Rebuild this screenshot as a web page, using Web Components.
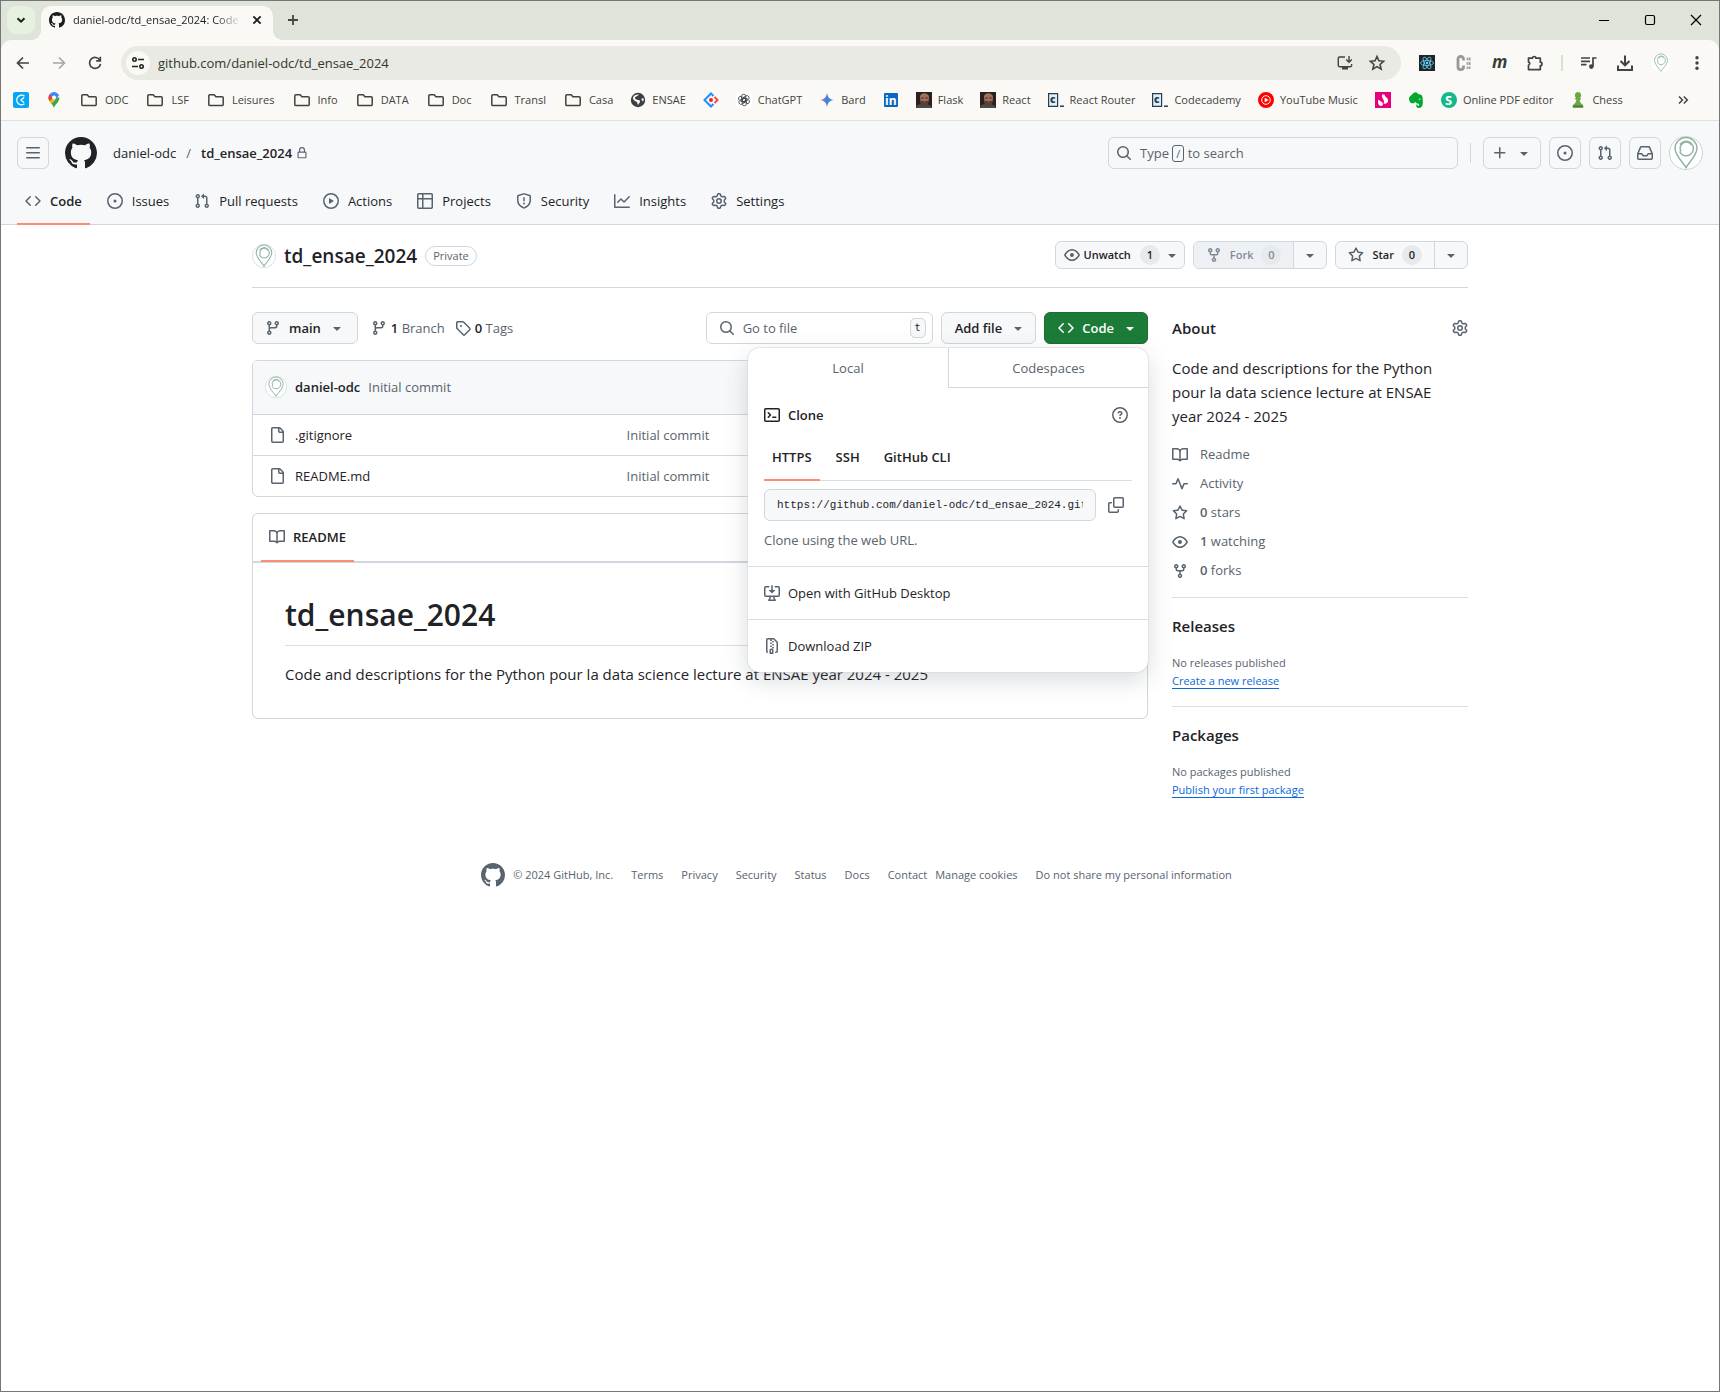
<!DOCTYPE html>
<html lang="en">
<head>
<meta charset="utf-8">
<title>daniel-odc/td_ensae_2024: Code</title>
<style>
html,body{margin:0}
body{font-family:"Open Sans","Noto Sans",sans-serif;font-size:13px;line-height:20px;color:#1f2328;background:#fff;
--line:#d0d7de;--line-soft:#d8dee4;--muted:#59636e;--canvas:#f6f8fa;--accent:#fd8c73;--chrome:#fbf9f5;--strip:#dee4d9}
</style>
</head>
<body>
<browser-window>
  <tab-strip slot="tabs"></tab-strip>
  <address-bar slot="toolbar"></address-bar>
  <bookmarks-bar slot="bookmarks"></bookmarks-bar>
  <site-header></site-header>
  <repo-page>
    <repo-title slot="title" name="td_ensae_2024"></repo-title>
    <branch-bar></branch-bar>
    <file-list></file-list>
    <readme-box></readme-box>
    <about-panel slot="side"></about-panel>
  </repo-page>
  <site-footer></site-footer>
</browser-window>
<script>
const OCT={
mark:'M8 0c4.42 0 8 3.58 8 8a8.013 8.013 0 0 1-5.45 7.59c-.4.08-.55-.17-.55-.38 0-.27.01-1.13.01-2.2 0-.75-.25-1.23-.54-1.48 1.78-.2 3.65-.88 3.65-3.95 0-.88-.31-1.59-.82-2.15.08-.2.36-1.02-.08-2.12 0 0-.67-.22-2.2.82-.64-.18-1.32-.27-2-.27-.68 0-1.36.09-2 .27-1.53-1.03-2.2-.82-2.2-.82-.44 1.1-.16 1.92-.08 2.12-.51.56-.82 1.28-.82 2.15 0 3.06 1.86 3.75 3.64 3.95-.23.2-.44.55-.51 1.07-.46.21-1.61.55-2.33-.66-.15-.24-.6-.83-1.23-.82-.67.01-.27.38.01.53.34.19.73.9.82 1.13.16.45.68 1.31 2.69.94 0 .67.01 1.3.01 1.49 0 .21-.15.45-.55.38A7.995 7.995 0 0 1 0 8c0-4.42 3.58-8 8-8Z',
code:'m11.28 3.22 4.25 4.25a.75.75 0 0 1 0 1.06l-4.25 4.25a.749.749 0 0 1-1.275-.326.749.749 0 0 1 .215-.734L13.94 8l-3.72-3.72a.749.749 0 0 1 .326-1.275.749.749 0 0 1 .734.215Zm-6.56 0a.751.751 0 0 1 1.042.018.751.751 0 0 1 .018 1.042L2.06 8l3.72 3.72a.749.749 0 0 1-.326 1.275.749.749 0 0 1-.734-.215L.47 8.53a.75.75 0 0 1 0-1.06Z',
issue:'M8 9.5a1.5 1.5 0 1 0 0-3 1.5 1.5 0 0 0 0 3ZM8 0a8 8 0 1 1 0 16A8 8 0 0 1 8 0ZM1.5 8a6.5 6.5 0 1 0 13 0 6.5 6.5 0 0 0-13 0Z',
pr:'M1.5 3.25a2.25 2.25 0 1 1 3 2.122v5.256a2.251 2.251 0 1 1-1.5 0V5.372A2.25 2.25 0 0 1 1.5 3.25Zm5.677-.177L9.573.677A.25.25 0 0 1 10 .854V2.5h1A2.5 2.5 0 0 1 13.5 5v5.628a2.251 2.251 0 1 1-1.5 0V5a1 1 0 0 0-1-1h-1v1.646a.25.25 0 0 1-.427.177L7.177 3.427a.25.25 0 0 1 0-.354ZM3.75 2.5a.75.75 0 1 0 0 1.5.75.75 0 0 0 0-1.5Zm0 9.5a.75.75 0 1 0 0 1.5.75.75 0 0 0 0-1.5Zm8.25.75a.75.75 0 1 0 1.5 0 .75.75 0 0 0-1.5 0Z',
play:'M8 0a8 8 0 1 1 0 16A8 8 0 0 1 8 0ZM1.5 8a6.5 6.5 0 1 0 13 0 6.5 6.5 0 0 0-13 0Zm4.879-2.773 4.264 2.559a.25.25 0 0 1 0 .428l-4.264 2.559A.25.25 0 0 1 6 10.559V5.442a.25.25 0 0 1 .379-.215Z',
table:'M0 1.75C0 .784.784 0 1.75 0h12.5C15.216 0 16 .784 16 1.75v12.5A1.75 1.75 0 0 1 14.25 16H1.75A1.75 1.75 0 0 1 0 14.25ZM6.5 6.5v8h7.75a.25.25 0 0 0 .25-.25V6.5Zm8-1.5V1.75a.25.25 0 0 0-.25-.25H6.5V5Zm-13 1.5v7.75c0 .138.112.25.25.25H5v-8ZM5 5V1.5H1.75a.25.25 0 0 0-.25.25V5Z',
shield:'M7.467.133a1.748 1.748 0 0 1 1.066 0l5.25 1.68A1.75 1.75 0 0 1 15 3.48V7c0 1.566-.32 3.182-1.303 4.682-.983 1.498-2.585 2.813-5.032 3.855a1.697 1.697 0 0 1-1.33 0c-2.447-1.042-4.049-2.357-5.032-3.855C1.32 10.182 1 8.566 1 7V3.48a1.75 1.75 0 0 1 1.217-1.667Zm.61 1.429a.25.25 0 0 0-.153 0l-5.25 1.68a.25.25 0 0 0-.174.238V7c0 1.358.275 2.666 1.057 3.86.784 1.194 2.121 2.34 4.366 3.297a.196.196 0 0 0 .154 0c2.245-.956 3.582-2.104 4.366-3.298C13.225 9.666 13.5 8.36 13.5 7V3.48a.251.251 0 0 0-.174-.237l-5.25-1.68ZM8.75 4.75v3a.75.75 0 0 1-1.5 0v-3a.75.75 0 0 1 1.5 0ZM9 10.5a1 1 0 1 1-2 0 1 1 0 0 1 2 0Z',
graph:'M1.5 1.75V13.5h13.75a.75.75 0 0 1 0 1.5H.75a.75.75 0 0 1-.75-.75V1.75a.75.75 0 0 1 1.5 0Zm14.28 2.53-5.25 5.25a.75.75 0 0 1-1.06 0L7 7.06 4.28 9.78a.751.751 0 0 1-1.042-.018.751.751 0 0 1-.018-1.042l3.25-3.25a.75.75 0 0 1 1.06 0L10 7.94l4.72-4.72a.751.751 0 0 1 1.042.018.751.751 0 0 1 .018 1.042Z',
gear:'M8 0a8.2 8.2 0 0 1 .701.031C9.444.095 9.99.645 10.16 1.29l.288 1.107c.018.066.079.158.212.224.231.114.454.243.668.386.123.082.233.09.299.071l1.103-.303c.644-.176 1.392.021 1.82.63.27.385.506.792.704 1.218.315.675.111 1.422-.364 1.891l-.814.806c-.049.048-.098.147-.088.294.016.257.016.515 0 .772-.01.147.038.246.088.294l.814.806c.475.469.679 1.216.364 1.891a7.977 7.977 0 0 1-.704 1.217c-.428.61-1.176.807-1.82.63l-1.102-.302c-.067-.019-.177-.011-.3.071a5.909 5.909 0 0 1-.668.386c-.133.066-.194.158-.211.224l-.29 1.106c-.168.646-.715 1.196-1.458 1.26a8.006 8.006 0 0 1-1.402 0c-.743-.064-1.289-.614-1.458-1.26l-.289-1.106c-.018-.066-.079-.158-.212-.224a5.738 5.738 0 0 1-.668-.386c-.123-.082-.233-.09-.299-.071l-1.103.303c-.644.176-1.392-.021-1.82-.63a8.12 8.12 0 0 1-.704-1.218c-.315-.675-.111-1.422.363-1.891l.815-.806c.05-.048.098-.147.088-.294a6.214 6.214 0 0 1 0-.772c.01-.147-.038-.246-.088-.294l-.815-.806C.635 6.045.431 5.298.746 4.623a7.92 7.92 0 0 1 .704-1.217c.428-.61 1.176-.807 1.82-.63l1.102.302c.067.019.177.011.3-.071.214-.143.437-.272.668-.386.133-.066.194-.158.211-.224l.29-1.106C6.009.645 6.556.095 7.299.03 7.53.01 7.764 0 8 0Zm-.571 1.525c-.036.003-.108.036-.137.146l-.289 1.105c-.147.561-.549.967-.998 1.189-.173.086-.34.183-.5.29-.417.278-.97.423-1.529.27l-1.103-.303c-.109-.03-.175.016-.195.045-.22.312-.412.644-.573.99-.014.031-.021.11.059.19l.815.806c.411.406.562.957.53 1.456a4.709 4.709 0 0 0 0 .582c.032.499-.119 1.05-.53 1.456l-.815.806c-.081.08-.073.159-.059.19.162.346.353.677.573.989.02.03.085.076.195.046l1.102-.303c.56-.153 1.113-.008 1.53.27.161.107.328.204.501.29.447.222.85.629.997 1.189l.289 1.105c.029.109.101.143.137.146a6.6 6.6 0 0 0 1.142 0c.036-.003.108-.036.137-.146l.289-1.105c.147-.561.549-.967.998-1.189.173-.086.34-.183.5-.29.417-.278.97-.423 1.529-.27l1.103.303c.109.029.175-.016.195-.045.22-.313.411-.644.573-.99.014-.031.021-.11-.059-.19l-.815-.806c-.411-.406-.562-.957-.53-1.456a4.709 4.709 0 0 0 0-.582c-.032-.499.119-1.05.53-1.456l.815-.806c.081-.08.073-.159.059-.19a6.464 6.464 0 0 0-.573-.989c-.02-.03-.085-.076-.195-.046l-1.102.303c-.56.153-1.113.008-1.53-.27a4.44 4.44 0 0 0-.501-.29c-.447-.222-.85-.629-.997-1.189l-.289-1.105c-.029-.11-.101-.143-.137-.146a6.6 6.6 0 0 0-1.142 0ZM11 8a3 3 0 1 1-6 0 3 3 0 0 1 6 0ZM9.5 8a1.5 1.5 0 1 0-3.001.001A1.5 1.5 0 0 0 9.5 8Z',
bars:'M1 2.75A.75.75 0 0 1 1.75 2h12.5a.75.75 0 0 1 0 1.5H1.75A.75.75 0 0 1 1 2.75Zm0 5A.75.75 0 0 1 1.75 7h12.5a.75.75 0 0 1 0 1.5H1.75A.75.75 0 0 1 1 7.75ZM1.75 12h12.5a.75.75 0 0 1 0 1.5H1.75a.75.75 0 0 1 0-1.5Z',
lock:'M4 4a4 4 0 0 1 8 0v2h.25c.966 0 1.75.784 1.75 1.75v5.5A1.75 1.75 0 0 1 12.25 15h-8.5A1.75 1.75 0 0 1 2 13.25v-5.5C2 6.784 2.784 6 3.75 6H4Zm8.25 3.5h-8.5a.25.25 0 0 0-.25.25v5.5c0 .138.112.25.25.25h8.5a.25.25 0 0 0 .25-.25v-5.5a.25.25 0 0 0-.25-.25ZM10.5 6V4a2.5 2.5 0 1 0-5 0v2Z',
search:'M10.68 11.74a6 6 0 0 1-7.922-8.982 6 6 0 0 1 8.982 7.922l3.04 3.04a.749.749 0 0 1-.326 1.275.749.749 0 0 1-.734-.215ZM11.5 7a4.499 4.499 0 1 0-8.997 0A4.499 4.499 0 0 0 11.5 7Z',
plus:'M7.75 2a.75.75 0 0 1 .75.75V7h4.25a.75.75 0 0 1 0 1.5H8.5v4.25a.75.75 0 0 1-1.5 0V8.5H2.75a.75.75 0 0 1 0-1.5H7V2.75A.75.75 0 0 1 7.75 2Z',
caret:'m4.427 7.427 3.396 3.396a.25.25 0 0 0 .354 0l3.396-3.396A.25.25 0 0 0 11.396 7H4.604a.25.25 0 0 0-.177.427Z',
inbox:'M2.8 2.06A1.75 1.75 0 0 1 4.41 1h7.18c.7 0 1.333.417 1.61 1.06l2.74 6.395c.04.093.06.194.06.295v4.5A1.75 1.75 0 0 1 14.25 15H1.75A1.75 1.75 0 0 1 0 13.25v-4.5c0-.101.02-.202.06-.295Zm1.61.44a.25.25 0 0 0-.23.152L1.887 8H4.75a.75.75 0 0 1 .6.3L6.625 10h2.75l1.275-1.7a.75.75 0 0 1 .6-.3h2.863L11.82 2.652a.25.25 0 0 0-.23-.152Zm10.09 7h-2.875l-1.275 1.7a.75.75 0 0 1-.6.3h-3.5a.75.75 0 0 1-.6-.3L4.375 9.5H1.5v3.75c0 .138.112.25.25.25h12.5a.25.25 0 0 0 .25-.25Z',
eye:'M8 2c1.981 0 3.671.992 4.933 2.078 1.27 1.091 2.187 2.345 2.637 3.023a1.62 1.62 0 0 1 0 1.798c-.45.678-1.367 1.932-2.637 3.023C11.67 13.008 9.981 14 8 14c-1.981 0-3.671-.992-4.933-2.078C1.797 10.83.88 9.576.43 8.898a1.62 1.62 0 0 1 0-1.798c.45-.677 1.367-1.931 2.637-3.022C4.33 2.992 6.019 2 8 2ZM1.679 7.932a.12.12 0 0 0 0 .136c.411.622 1.241 1.75 2.366 2.717C5.176 11.758 6.527 12.5 8 12.5c1.473 0 2.825-.742 3.955-1.715 1.124-.967 1.954-2.096 2.366-2.717a.12.12 0 0 0 0-.136c-.412-.621-1.242-1.75-2.366-2.717C10.824 4.242 9.473 3.5 8 3.5c-1.473 0-2.825.742-3.955 1.715-1.124.967-1.954 2.096-2.366 2.717ZM8 10a2 2 0 1 1-.001-3.999A2 2 0 0 1 8 10Z',
fork:'M5 5.372v.878c0 .414.336.75.75.75h4.5a.75.75 0 0 0 .75-.75v-.878a2.25 2.25 0 1 1 1.5 0v.878a2.25 2.25 0 0 1-2.25 2.25h-1.5v2.128a2.251 2.251 0 1 1-1.5 0V8.5h-1.5A2.25 2.25 0 0 1 3.5 6.25v-.878a2.25 2.25 0 1 1 1.5 0ZM5 3.25a.75.75 0 1 0-1.5 0 .75.75 0 0 0 1.5 0Zm6.75.75a.75.75 0 1 0 0-1.5.75.75 0 0 0 0 1.5Zm-3 8.75a.75.75 0 1 0-1.5 0 .75.75 0 0 0 1.5 0Z',
star:'M8 .25a.75.75 0 0 1 .673.418l1.882 3.815 4.21.612a.75.75 0 0 1 .416 1.279l-3.046 2.97.719 4.192a.751.751 0 0 1-1.088.791L8 12.347l-3.766 1.98a.75.75 0 0 1-1.088-.79l.72-4.194L.818 6.374a.75.75 0 0 1 .416-1.28l4.21-.611L7.327.668A.75.75 0 0 1 8 .25Zm0 2.445L6.615 5.5a.75.75 0 0 1-.564.41l-3.097.45 2.24 2.184a.75.75 0 0 1 .216.664l-.528 3.084 2.769-1.456a.75.75 0 0 1 .698 0l2.77 1.456-.53-3.084a.75.75 0 0 1 .216-.664l2.24-2.183-3.096-.45a.75.75 0 0 1-.564-.41L8 2.694Z',
branch:'M9.5 3.25a2.25 2.25 0 1 1 3 2.122V6A2.5 2.5 0 0 1 10 8.5H6a1 1 0 0 0-1 1v1.128a2.251 2.251 0 1 1-1.5 0V5.372a2.25 2.25 0 1 1 1.5 0v1.836A2.493 2.493 0 0 1 6 7h4a1 1 0 0 0 1-1v-.628A2.25 2.25 0 0 1 9.5 3.25Zm-6 0a.75.75 0 1 0 1.5 0 .75.75 0 0 0-1.5 0Zm8.25-.75a.75.75 0 1 0 0 1.5.75.75 0 0 0 0-1.5ZM4.25 12a.75.75 0 1 0 0 1.5.75.75 0 0 0 0-1.5Z',
tag:'M1 7.775V2.75C1 1.784 1.784 1 2.75 1h5.025c.464 0 .91.184 1.238.513l6.25 6.25a1.75 1.75 0 0 1 0 2.474l-5.026 5.026a1.75 1.75 0 0 1-2.474 0l-6.25-6.25A1.752 1.752 0 0 1 1 7.775Zm1.5 0c0 .066.026.13.073.177l6.25 6.25a.25.25 0 0 0 .354 0l5.025-5.025a.25.25 0 0 0 0-.354l-6.25-6.25a.25.25 0 0 0-.177-.073H2.75a.25.25 0 0 0-.25.25ZM6 5a1 1 0 1 1 0 2 1 1 0 0 1 0-2Z',
file:'M2 1.75C2 .784 2.784 0 3.75 0h6.586c.464 0 .909.184 1.237.513l2.914 2.914c.329.328.513.773.513 1.237v9.586A1.75 1.75 0 0 1 13.25 16h-9.5A1.75 1.75 0 0 1 2 14.25Zm1.75-.25a.25.25 0 0 0-.25.25v12.5c0 .138.112.25.25.25h9.5a.25.25 0 0 0 .25-.25V6h-2.75A1.75 1.75 0 0 1 9 4.25V1.5Zm6.75.062V4.25c0 .138.112.25.25.25h2.688l-.011-.013-2.914-2.914-.013-.011Z',
book:'M0 1.75A.75.75 0 0 1 .75 1h4.253c1.227 0 2.317.59 3 1.501A3.743 3.743 0 0 1 11.006 1h4.245a.75.75 0 0 1 .75.75v10.5a.75.75 0 0 1-.75.75h-4.507a2.25 2.25 0 0 0-1.591.659l-.622.621a.75.75 0 0 1-1.06 0l-.622-.621A2.25 2.25 0 0 0 5.258 13H.75a.75.75 0 0 1-.75-.75Zm7.251 10.324.004-5.073-.002-2.253A2.25 2.25 0 0 0 5.003 2.5H1.5v9h3.757a3.75 3.75 0 0 1 1.994.574ZM8.755 4.75l-.004 7.322a3.752 3.752 0 0 1 1.992-.572H14.5v-9h-3.495a2.25 2.25 0 0 0-2.25 2.25Z',
pulse:'M6 2c.306 0 .582.187.696.471L10 10.731l1.304-3.26A.751.751 0 0 1 12 7h3.25a.75.75 0 0 1 0 1.5h-2.742l-1.812 4.528a.751.751 0 0 1-1.392 0L6 4.77 4.696 8.03A.75.75 0 0 1 4 8.5H.75a.75.75 0 0 1 0-1.5h2.742l1.812-4.529A.751.751 0 0 1 6 2Z',
terminal:'M0 2.75C0 1.784.784 1 1.75 1h12.5c.966 0 1.75.784 1.75 1.75v10.5A1.75 1.75 0 0 1 14.25 15H1.75A1.75 1.75 0 0 1 0 13.25Zm1.75-.25a.25.25 0 0 0-.25.25v10.5c0 .138.112.25.25.25h12.5a.25.25 0 0 0 .25-.25V2.75a.25.25 0 0 0-.25-.25ZM7.25 8a.749.749 0 0 1-.22.53l-2.25 2.25a.749.749 0 0 1-1.275-.326.749.749 0 0 1 .215-.734L5.44 8 3.72 6.28a.749.749 0 0 1 .326-1.275.749.749 0 0 1 .734.215l2.25 2.25c.141.14.22.331.22.53Zm1.5 1.5h3a.75.75 0 0 1 0 1.5h-3a.75.75 0 0 1 0-1.5Z',
question:'M0 8a8 8 0 1 1 16 0A8 8 0 0 1 0 8Zm8-6.5a6.5 6.5 0 1 0 0 13 6.5 6.5 0 0 0 0-13ZM6.92 6.085h.001a.749.749 0 1 1-1.342-.67c.169-.339.436-.701.849-.977C6.845 4.16 7.369 4 8 4a2.756 2.756 0 0 1 1.637.525c.503.377.863.965.863 1.725 0 .448-.115.83-.329 1.15-.205.307-.47.513-.692.662-.109.072-.22.138-.313.195l-.006.004a6.24 6.24 0 0 0-.26.16.952.952 0 0 0-.276.245.75.75 0 0 1-1.248-.832c.184-.264.42-.489.692-.661.103-.067.207-.132.313-.195l.007-.004c.1-.061.182-.11.258-.161a.969.969 0 0 0 .277-.245C8.96 6.514 9 6.427 9 6.25a.612.612 0 0 0-.262-.525A1.27 1.27 0 0 0 8 5.5c-.369 0-.595.09-.74.187a1.01 1.01 0 0 0-.34.398ZM9 11a1 1 0 1 1-2 0 1 1 0 0 1 2 0Z',
copy:'M0 6.75C0 5.784.784 5 1.75 5h1.5a.75.75 0 0 1 0 1.5h-1.5a.25.25 0 0 0-.25.25v7.5c0 .138.112.25.25.25h7.5a.25.25 0 0 0 .25-.25v-1.5a.75.75 0 0 1 1.5 0v1.5A1.75 1.75 0 0 1 9.25 16h-7.5A1.75 1.75 0 0 1 0 14.25ZM5 1.75C5 .784 5.784 0 6.75 0h7.5C15.216 0 16 .784 16 1.75v7.5A1.75 1.75 0 0 1 14.25 11h-7.5A1.75 1.75 0 0 1 5 9.25Zm1.75-.25a.25.25 0 0 0-.25.25v7.5c0 .138.112.25.25.25h7.5a.25.25 0 0 0 .25-.25v-7.5a.25.25 0 0 0-.25-.25Z',
desktop:'m4.927 5.427 2.896 2.896a.25.25 0 0 0 .354 0l2.896-2.896A.25.25 0 0 0 10.896 5H8.75V.75a.75.75 0 1 0-1.5 0V5H5.104a.25.25 0 0 0-.177.427ZM1.573 2.573a.25.25 0 0 0-.073.177v7.5a.25.25 0 0 0 .25.25h12.5a.25.25 0 0 0 .25-.25v-7.5a.25.25 0 0 0-.25-.25h-3a.75.75 0 1 1 0-1.5h3A1.75 1.75 0 0 1 16 2.75v7.5A1.75 1.75 0 0 1 14.25 12h-3.727c.099 1.041.52 1.872 1.292 2.757A.752.752 0 0 1 11.25 16h-6.5a.75.75 0 0 1-.565-1.243c.772-.885 1.192-1.716 1.292-2.757H1.75A1.75 1.75 0 0 1 0 10.25v-7.5A1.75 1.75 0 0 1 1.75 1h3a.75.75 0 0 1 0 1.5h-3a.25.25 0 0 0-.177.073ZM6.982 12a5.72 5.72 0 0 1-.765 2.5h3.566a5.72 5.72 0 0 1-.765-2.5H6.982Z',
zip:'M3.5 1.75v11.5c0 .09.048.173.126.217a.75.75 0 0 1-.752 1.298A1.748 1.748 0 0 1 2 13.25V1.75C2 .784 2.784 0 3.75 0h5.586c.464 0 .909.185 1.237.513l2.914 2.914c.329.328.513.773.513 1.237v8.586A1.75 1.75 0 0 1 12.25 15h-.5a.75.75 0 0 1 0-1.5h.5a.25.25 0 0 0 .25-.25V4.664a.25.25 0 0 0-.073-.177L9.513 1.573a.25.25 0 0 0-.177-.073H7.25a.75.75 0 0 1 0 1.5h-.5a.75.75 0 0 1 0-1.5h-3a.25.25 0 0 0-.25.25Zm3.75 8.75h.5c.966 0 1.75.784 1.75 1.75v3a.75.75 0 0 1-.75.75h-2.5a.75.75 0 0 1-.75-.75v-3c0-.966.784-1.75 1.75-1.75ZM6 5.25a.75.75 0 0 1 .75-.75h.5a.75.75 0 0 1 0 1.5h-.5A.75.75 0 0 1 6 5.25Zm.75 2.25h.5a.75.75 0 0 1 0 1.5h-.5a.75.75 0 0 1 0-1.5ZM8 6.75A.75.75 0 0 1 8.75 6h.5a.75.75 0 0 1 0 1.5h-.5A.75.75 0 0 1 8 6.75ZM8.75 3h.5a.75.75 0 0 1 0 1.5h-.5a.75.75 0 0 1 0-1.5ZM8 9.75A.75.75 0 0 1 8.75 9h.5a.75.75 0 0 1 0 1.5h-.5A.75.75 0 0 1 8 9.75Zm-1 2.5v2.25h1v-2.25a.25.25 0 0 0-.25-.25h-.5a.25.25 0 0 0-.25.25Z'
};
const line=(d,w=1.8)=>`<g fill="none" stroke="currentColor" stroke-width="${w}">${d}</g>`;
/* Multi-part marks: [viewBox size, markup] */
const ART={
chevron:[16,line('<path d="m4.500 6.200 3.500 3.500 3.500-3.500"/>',2)],
x:[16,line('<path d="m4.400 4.400 7.200 7.200M11.600 4.400 4.400 11.600"/>',1.9)],
tabplus:[16,line('<path d="M8 3v10M3 8h10"/>',1.8)],
min:[16,line('<path d="M3 8.500h10"/>',1)],
max:[16,line('<rect x="3.500" y="3.500" width="9" height="9" rx="1.500"/>',1.2)],
close:[16,line('<path d="m3 3 10 10M13 3 3 13"/>',1.2)],
back:[16,line('<path d="M14 8H3M8 2.500 2.500 8 8 13.500"/>',1.7)],
forward:[16,line('<path d="M2 8h11M8 2.500 13.500 8 8 13.500"/>',1.7)],
reload:[16,line('<path d="M12.900 5.300A5.500 5.500 0 1 0 13.500 8.800"/><path d="M13.300 1.800v4.100H9.200"/>',1.7)],
tune:[16,line('<circle cx="4.500" cy="4.500" r="1.700"/><path d="M8 4.500h6M2 11.500h6"/><circle cx="11.500" cy="11.500" r="1.700"/>',1.6)],
install:[16,line('<path d="M8 2H2.500A1.200 1.200 0 0 0 1.300 3.200v7.300a1.200 1.200 0 0 0 1.200 1.200h10.900a1.200 1.200 0 0 0 1.200-1.200V9"/><path d="M12 1v6M9.200 4.500 12 7.200l2.800-2.700"/>',1.4)+'<path d="M5 12h6v2.500H5z"/>'],
bookmark:[16,line('<path d="m8 2.200 1.700 3.900 4.200.4-3.200 2.800 1 4.100L8 11.200l-3.700 2.200 1-4.100L2.100 6.500l4.200-.4Z"/>',1.4)],
react:[16,'<path fill="#20232a" d="M0 0h16v16H0z"/><g fill="none" stroke="#61dafb" stroke-width=".8"><ellipse cx="8" cy="8" rx="6.500" ry="2.500"/><ellipse cx="8" cy="8" rx="6.500" ry="2.500" transform="rotate(60 8 8)"/><ellipse cx="8" cy="8" rx="6.500" ry="2.500" transform="rotate(120 8 8)"/></g><circle cx="8" cy="8" r="1.300" fill="#61dafb"/>'],
ci:[16,'<path d="M8.500 5.500V4A2.500 2.500 0 0 0 6 1.500h-.500A2.500 2.500 0 0 0 3 4v8a2.500 2.500 0 0 0 2.500 2.500H6A2.500 2.500 0 0 0 8.500 12v-1.500" fill="none" stroke="#999" stroke-width="2.800"/><path d="M12.500 2.500v11.500" stroke="#aaa" stroke-width="2" stroke-dasharray="3 1.500" fill="none"/><path d="M14.700 2.500v11.500" stroke="#999" stroke-width="1.600" stroke-dasharray="3 1.500" fill="none"/>'],
m:[16,'<text x="1" y="13" font-family="Open Sans" font-size="17" font-weight="700" font-style="italic" fill="#3c3c3c">m</text>'],
puzzle:[16,line('<path d="M1.500 3.200h4a1.700 1.700 0 0 1 3.400 0h4.400v4a1.700 1.700 0 0 1 0 3.400v4H1.500v-4.300a1.800 1.800 0 0 0 0-3.400Z" stroke-linejoin="round"/>',1.7)],
queue:[16,line('<path d="M0 3h9M0 6.300h9M0 9.600h5.500M12 11.500V3h3.500"/>',1.7)+'<circle cx="10.300" cy="11.600" r="2.300"/>'],
download:[16,line('<path d="M8 .5v9.500M3.500 6 8 10.300 12.500 6M1 10.500V15h14v-4.500"/>',2)],
dots:[16,'<circle cx="8" cy="2.700" r="1.700"/><circle cx="8" cy="8" r="1.700"/><circle cx="8" cy="13.300" r="1.700"/>'],
more:[16,line('<path d="m4 4.500 3.500 3.500L4 11.500M8.800 4.500 12.300 8l-3.500 3.500"/>',1.5)],
folder:[20,line('<path d="M3.900 4.700h4.300l1.700 2h6.200a1.100 1.100 0 0 1 1.100 1.100v6.600a1.100 1.100 0 0 1-1.100 1.100H3.900a1.100 1.100 0 0 1-1.100-1.100V5.800a1.100 1.100 0 0 1 1.100-1.100Z"/>',1.5)],
clickup:[16,'<rect width="16" height="16" rx="2" fill="#05a7f5"/><g fill="none" stroke="#fff" stroke-width="1.300"><path d="M11.500 4.200A4.800 4.800 0 1 0 11.500 11.800M11 5.500 8 8l3 2.500"/></g>'],
maps:[16,'<path fill="#34a853" d="M8 16C7.300 12.500 2.500 10 2.500 5.500h11C13.500 10 8.700 12.500 8 16Z"/><path fill="#fbbc04" d="M3.500 9 9 3l1.500 4-5.300 5Z"/><path fill="#ea4335" d="M3.700 2 8 5.500 3.500 9A6 6 0 0 1 3.700 2Z"/><path fill="#4285f4" d="M3.700 2A5.500 5.500 0 0 1 13 3.500L9 8 6 6Z"/><circle cx="8" cy="5.500" r="2" fill="#fff"/>'],
globe:[16,'<circle cx="8" cy="8" r="7.200" fill="#3c4043"/><path fill="#fbf9f5" d="M9 2.500C8 4.500 5.500 4 5 5.500S7 8 8.500 8s2 1.500 1.200 2.500L8 13c-1-1.500 0-2.500-2-3.500S2.500 7 3 5.500 5.500 2 9 2.500ZM12 6l2 1-1 2.500L11.500 8Z"/>'],
diamond:[16,'<g fill="none" stroke-width="2"><path stroke="#1890ff" d="M10.500 4 8 1.500 1.500 8 8 14.500l2.500-2.500"/><path stroke="#f5484f" d="M11.500 5 14.500 8l-3 3"/></g><circle cx="8" cy="8" r="2" fill="#f5222d"/>'],
gpt:[16,'<rect width="16" height="16" rx="3" fill="#fff"/><g fill="none" stroke="#3c4043" stroke-width=".8"><rect x="5.500" y="2.200" width="4.200" height="7.500" rx="2.100"/><rect x="5.500" y="2.200" width="4.200" height="7.500" rx="2.100" transform="rotate(60 8 8)"/><rect x="5.500" y="2.200" width="4.200" height="7.500" rx="2.100" transform="rotate(120 8 8)"/><rect x="5.500" y="2.200" width="4.200" height="7.500" rx="2.100" transform="rotate(180 8 8)"/><rect x="5.500" y="2.200" width="4.200" height="7.500" rx="2.100" transform="rotate(240 8 8)"/><rect x="5.500" y="2.200" width="4.200" height="7.500" rx="2.100" transform="rotate(300 8 8)"/></g>'],
bard:[16,'<defs><linearGradient id="b"><stop offset=".1" stop-color="#b36fc4"/><stop offset=".5" stop-color="#3f7fd8"/><stop offset="1" stop-color="#35a0ea"/></linearGradient></defs><path fill="url(#b)" d="M8 1C8.800 5.500 10.500 7.200 15 8 10.500 8.800 8.800 10.500 8 15 7.200 10.500 5.500 8.800 1 8 5.500 7.200 7.200 5.500 8 1Z"/>'],
linkedin:[16,'<rect x="1" y="1" width="14" height="14" rx="1" fill="#0a66c2"/><text x="2" y="13" font-family="Open Sans" font-size="12" font-weight="700" fill="#fff">in</text>'],
face:[16,'<path fill="#2a211e" d="M0 0h16v16H0z"/><path fill="#a3705c" d="M4 5c0-5 8.500-5 9 0l-.5 5L10 14H7L4.500 10Z"/><path fill="#5b4038" d="M4.300 8.500c3 1 5 1 8 0l-.3 3-2 3H7l-2.500-3Z"/><path fill="#4a4a48" d="m0 16 1-3 5-1 2 2 3-2 4 2 1 2Z"/><path stroke="#2a1813" d="M5.500 6h2M9.500 6h2"/>'],
codecademy:[16,'<path fill="#e4ebf2" stroke="#204056" stroke-width="1.200" d="M.6 1.600h9v12.800h-9z"/><path stroke="#204056" stroke-width="1.500" d="M12 14.200h4"/><text x="2" y="11" font-family="Open Sans" font-size="10" font-weight="800" fill="#204056">c</text>'],
ytmusic:[16,'<circle cx="8" cy="8" r="8" fill="red"/><circle cx="8" cy="8" r="4.300" fill="none" stroke="#fff"/><path fill="#fff" d="m6.700 5.800 4 2.200-4 2.200Z"/>'],
pink:[16,'<path fill="#e6007e" d="M0 0h16v16H0z"/><path fill="#fff" d="M7 2.500h2.500C9.500 5 13.500 5.500 13 9c-.3 2.300-2.500 3.300-4.500 2.500 2-3.500-2.500-5-1.500-9ZM3.500 7.500C5 9.500 8.500 10 8 12.500c-.4 1.800-3 1.700-4 .5S2.700 9 3.500 7.500Z"/>'],
evernote:[16,'<path fill="#00a82d" d="M5.500 1 1 5.500c0 3 .8 5.500 3 5.700 2 .2 3-.7 3.200-1.500.7 1.800 2 1.800 3.300 2 1 .2.800 2.300-.3 2.300-1 0-.2-1.700-1.200-1.500-1.500.2-1 3.300 1.500 3.500 3.500 0 4.500-2.500 4.300-7 0-4-.5-6-1.800-6.300L10 2C9.500.3 7.500-.5 5.500 1Z"/><path fill="#fbf9f5" d="M10.700 7.500c.3-1.300 1.800-1.300 2 .2Z"/>'],
pdf:[16,'<circle cx="8" cy="8" r="8" fill="#14b98a"/><text x="4" y="13" font-family="Open Sans" font-size="13" font-weight="700" fill="#fff">S</text>'],
chess:[16,'<path fill="#69a844" d="M8 0a3.200 3.200 0 0 1 2 5.700l1 .8v1H9.700c.1 2 .8 3.500 2.300 4.500 1 .8 1.300 2 1.200 3.500H2.800C2.700 14 3 12.800 4 12c1.500-1 2.200-2.500 2.300-4.500H5v-1l1-.8A3.200 3.200 0 0 1 8 0Z"/><path fill="#4b7a35" d="M2.800 13.500h10.400v2H2.800z"/>'],
pin:[34,'<circle cx="17" cy="17" r="16.500" fill="#fff" style="stroke:var(--ring,#cdd3d6)"/><g fill="none" stroke="#93b3a4" stroke-width="1.500"><path d="M17 31.500C14 26.500 6 19 6 12.500a11 11 0 0 1 22 0C28 19 20 26.500 17 31.500Z"/><path d="M10.500 15.500A7.300 7.300 0 1 0 11 8.500"/><path d="M22.500 9A6 6 0 1 0 12 15.500"/></g>']
};
const BASE=`<style>
:host{display:block;box-sizing:border-box}*{box-sizing:border-box}
a{color:inherit;text-decoration:none}
button,input{font:inherit;color:inherit;margin:0}
button{display:inline-flex;align-items:center;justify-content:center;border:0;background:none;padding:0;cursor:pointer;white-space:nowrap}
h1,h2,p,ul{margin:0;padding:0}ul{list-style:none}
</style>`;
/* Registers an element whose open shadow root holds the given markup. */
const define=(tag,markup)=>customElements.define(tag,class extends HTMLElement{
  connectedCallback(){
    if(this.shadowRoot)return;
    const t=document.createElement('template');
    t.innerHTML=BASE+(typeof markup==='function'?markup(this):markup);
    this.attachShadow({mode:'open'}).append(t.content.cloneNode(true));
  }
});
define('ui-icon',el=>{
  const n=el.getAttribute('name'),s=el.getAttribute('size')||16,art=ART[n];
  const box=art?art[0]:16,body=art?art[1]:`<path fill-rule="evenodd" d="${OCT[n]}"/>`;
  return `<style>:host{display:inline-block;flex:none;width:${s}px;height:${s}px}svg{display:block;overflow:visible}</style>
  <svg width="${s}" height="${s}" viewBox="0 0 ${box} ${box}" fill="currentColor" aria-hidden="true">${body}</svg>`;
});
define('browser-window',`<style>
:host{min-height:100vh;border:1px solid #767676;background:#fff;display:flex;flex-direction:column}
.top{background:var(--strip)}
.panel{background:var(--chrome);border-radius:10px 10px 0 0;border-bottom:1px solid #dfe1dc}
</style>
<div class="top"><slot name="tabs"></slot><div class="panel"><slot name="toolbar"></slot><slot name="bookmarks"></slot></div></div>
<slot></slot>`);
define('tab-strip',`<style>
:host{display:flex;height:39px;padding:5px 0 0 6px;color:#1b1f1b;font-size:11px}
.list{width:28px;height:28px;border-radius:9px;background:#e6f2df}
.tab{display:flex;align-items:center;gap:8px;width:232px;margin-left:6px;padding:0 8px 6px;height:34px;background:var(--chrome);border-radius:10px 10px 0 0;position:relative}
.tab::before,.tab::after{content:"";position:absolute;bottom:0;width:10px;height:10px}
.tab::before{left:-10px;background:radial-gradient(circle at 0 0,transparent 10px,var(--chrome) 10px)}
.tab::after{right:-10px;background:radial-gradient(circle at 100% 0,transparent 10px,var(--chrome) 10px)}
.name{flex:1;overflow:hidden;white-space:nowrap;-webkit-mask-image:linear-gradient(90deg,#000 85%,transparent)}
.new{width:28px;height:28px;margin-left:6px;color:#444}
.win{display:flex;margin-left:auto}.win button{width:46px;height:28px;color:#000}
</style>
<button class="list" aria-label="Search tabs"><ui-icon name="chevron"></ui-icon></button>
<div class="tab"><ui-icon name="mark"></ui-icon><span class="name">daniel-odc/td_ensae_2024: Code</span><button aria-label="Close tab"><ui-icon name="x"></ui-icon></button></div>
<button class="new" aria-label="New tab"><ui-icon name="tabplus"></ui-icon></button>
<div class="win"><button aria-label="Minimize"><ui-icon name="min"></ui-icon></button><button aria-label="Maximize"><ui-icon name="max"></ui-icon></button><button aria-label="Close"><ui-icon name="close"></ui-icon></button></div>`);
define('address-bar',`<style>
:host{display:flex;align-items:center;padding:6px 4px 0;height:40px;color:#41443f}
.b{width:36px;height:34px;flex:none}.off{color:#a5a7a2}
.field{display:flex;align-items:center;flex:1;height:34px;margin:0 8px;padding:0 8px 0 5px;border-radius:17px;background:#e8eae3}
.site{width:24px;height:24px;border-radius:12px;background:var(--chrome);color:#222}
input{flex:1;border:0;background:none;outline:0;padding:0 8px;color:#34372f}
.field .act{width:32px;height:32px}
.sep{width:2px;height:16px;background:#d5e2cc;margin:0 8px}
</style>
<button class="b" aria-label="Back"><ui-icon name="back"></ui-icon></button><button class="b off" aria-label="Forward"><ui-icon name="forward"></ui-icon></button><button class="b" aria-label="Reload"><ui-icon name="reload"></ui-icon></button>
<div class="field"><button class="site" aria-label="Site information"><ui-icon name="tune"></ui-icon></button>
<input aria-label="Address" value="github.com/daniel-odc/td_ensae_2024">
<button class="act" aria-label="Install"><ui-icon name="install"></ui-icon></button><button class="act" aria-label="Bookmark"><ui-icon name="bookmark" size="18"></ui-icon></button></div>
<button class="b" aria-label="React tools"><ui-icon name="react"></ui-icon></button><button class="b" aria-label="Extension C"><ui-icon name="ci"></ui-icon></button><button class="b" aria-label="Extension M"><ui-icon name="m"></ui-icon></button><button class="b" aria-label="Extensions"><ui-icon name="puzzle"></ui-icon></button>
<span class="sep"></span>
<button class="b" aria-label="Media"><ui-icon name="queue"></ui-icon></button><button class="b" aria-label="Downloads"><ui-icon name="download"></ui-icon></button><button class="b" aria-label="Profile" style="--ring:none"><ui-icon name="pin" size="20"></ui-icon></button><button class="b" aria-label="Menu"><ui-icon name="dots"></ui-icon></button>`);
define('bookmark-link',el=>{
  const folder=!el.hasAttribute('icon');
  return `<style>a{display:flex;align-items:center;gap:6px;white-space:nowrap}</style><a href="#" aria-label="${el.getAttribute('label')||el.textContent}"><ui-icon name="${folder?'folder':el.getAttribute('icon')}" size="${folder?20:16}"></ui-icon>${el.textContent?'<slot></slot>':''}</a>`;
});
define('bookmarks-bar',`<style>
:host{display:flex;align-items:center;gap:17px;height:40px;padding:0 28px 0 12px;font-size:11px;color:#41443f}
button{margin-left:auto}
</style>
<bookmark-link icon="clickup" label="ClickUp"></bookmark-link><bookmark-link icon="maps" label="Maps"></bookmark-link>
<bookmark-link>ODC</bookmark-link><bookmark-link>LSF</bookmark-link><bookmark-link>Leisures</bookmark-link><bookmark-link>Info</bookmark-link><bookmark-link>DATA</bookmark-link><bookmark-link>Doc</bookmark-link><bookmark-link>Transl</bookmark-link><bookmark-link>Casa</bookmark-link>
<bookmark-link icon="globe">ENSAE</bookmark-link><bookmark-link icon="diamond" label="Design"></bookmark-link><bookmark-link icon="gpt">ChatGPT</bookmark-link><bookmark-link icon="bard">Bard</bookmark-link><bookmark-link icon="linkedin" label="LinkedIn"></bookmark-link>
<bookmark-link icon="face">Flask</bookmark-link><bookmark-link icon="face">React</bookmark-link><bookmark-link icon="codecademy">React Router</bookmark-link><bookmark-link icon="codecademy">Codecademy</bookmark-link><bookmark-link icon="ytmusic">YouTube Music</bookmark-link>
<bookmark-link icon="pink" label="Courses"></bookmark-link><bookmark-link icon="evernote" label="Evernote"></bookmark-link><bookmark-link icon="pdf">Online PDF editor</bookmark-link><bookmark-link icon="chess">Chess</bookmark-link>
<button aria-label="More bookmarks"><ui-icon name="more"></ui-icon></button>`);
define('nav-tab',el=>`<style>
a{display:flex;align-items:center;gap:9px;height:48px;padding:0 8px;border-bottom:2px solid transparent;border-top:2px solid transparent;white-space:nowrap}
:host([current]) a{border-bottom-color:var(--accent);font-weight:600}
ui-icon{color:var(--muted)}
</style><a href="#"><ui-icon name="${el.getAttribute('icon')}"></ui-icon><slot></slot></a>`);
define('site-header',`<style>
:host{background:var(--canvas);border-bottom:1px solid var(--line);padding:16px 16px 0}
.row,nav{display:flex;align-items:center}
.row{height:32px}
.box{height:32px;min-width:32px;border:1px solid var(--line);border-radius:6px;color:var(--muted)}
.logo{margin:0 16px;height:32px}
.path{display:flex;align-items:center;gap:10px;white-space:nowrap}
.path i{color:var(--muted);font-style:normal}.path b{font-weight:600}
.path .repo{display:flex;align-items:center;gap:4px}.path ui-icon{color:var(--muted)}
.tools{display:flex;align-items:center;gap:8px;margin-left:auto}
.search{width:350px;justify-content:flex-start;gap:8px;padding:0 7px}
.search kbd{font:inherit;font-size:11px;line-height:14px;border:1px solid var(--muted);border-radius:3px;padding:0 3px}
.sep{width:1px;height:20px;background:var(--line);margin:0 4px}
.add{padding:0 8px;gap:8px;width:58px}
nav{gap:9px;margin:8px 0 -1px}
</style>
<div class="row"><button class="box" aria-label="Open menu"><ui-icon name="bars"></ui-icon></button>
<a class="logo" href="#" aria-label="GitHub"><ui-icon name="mark" size="32"></ui-icon></a>
<div class="path"><a href="#">daniel-odc</a><i>/</i><a class="repo" href="#"><b>td_ensae_2024</b><ui-icon name="lock" size="12"></ui-icon></a></div>
<div class="tools"><button class="box search"><ui-icon name="search"></ui-icon><span>Type <kbd>/</kbd> to search</span></button><span class="sep"></span>
<button class="box add" aria-label="Create new"><ui-icon name="plus"></ui-icon><ui-icon name="caret"></ui-icon></button>
<button class="box" aria-label="Issues"><ui-icon name="issue"></ui-icon></button><button class="box" aria-label="Pull requests"><ui-icon name="pr"></ui-icon></button><button class="box" aria-label="Notifications"><ui-icon name="inbox"></ui-icon></button>
<button aria-label="Account"><ui-icon name="pin" size="34"></ui-icon></button></div></div>
<nav><nav-tab icon="code" current>Code</nav-tab><nav-tab icon="issue">Issues</nav-tab><nav-tab icon="pr">Pull requests</nav-tab><nav-tab icon="play">Actions</nav-tab><nav-tab icon="table">Projects</nav-tab><nav-tab icon="shield">Security</nav-tab><nav-tab icon="graph">Insights</nav-tab><nav-tab icon="gear">Settings</nav-tab></nav>`);
define('repo-page',`<style>
:host{width:100%;max-width:1280px;margin:0 auto;padding:0 32px}
.cols{display:grid;grid-template-columns:minmax(0,1fr) 296px;gap:24px;align-items:start;margin-top:24px}
.main{display:flex;flex-direction:column;gap:16px}
</style><slot name="title"></slot><div class="cols"><div class="main"><slot></slot></div><slot name="side"></slot></div>`);
define('repo-title',el=>`<style>
:host{border-bottom:1px solid var(--line);padding:16px 0}
.row{display:flex;align-items:flex-start;height:30px}
.id{display:flex;align-items:center;gap:8px;height:30px}
h1{font-size:19px;line-height:30px;font-weight:600}
.badge{font-size:11px;line-height:18px;font-weight:500;color:var(--muted);border:1px solid var(--line);border-radius:10px;padding:0 7px}
.acts{display:flex;gap:8px;margin-left:auto;font-size:11px;font-weight:600}
.grp{display:flex;border:1px solid var(--line);border-radius:6px;background:var(--canvas);overflow:hidden;height:28px}
.grp button{height:26px}.grp button+button{width:33px;border-left:1px solid var(--line)}
.first{gap:8px;padding:0 12px}.tight{gap:4px;padding:0 4px 0 8px}.tight .n{margin:0 0 0 5px}
.n{min-width:20px;height:20px;line-height:20px;border-radius:10px;background:#e7eaed;text-align:center}
ui-icon{color:var(--muted)}
[disabled]{color:#818b98;background:#eef1f4;cursor:default}[disabled] ui-icon{color:#818b98}
</style>
<div class="row"><div class="id"><ui-icon name="pin" size="24"></ui-icon><h1>${el.getAttribute('name')}</h1><span class="badge">Private</span></div>
<div class="acts"><div class="grp"><button class="tight"><ui-icon name="eye"></ui-icon>Unwatch <span class="n">1</span><ui-icon name="caret"></ui-icon></button></div>
<div class="grp"><button class="first" disabled><ui-icon name="fork"></ui-icon>Fork <span class="n">0</span></button><button aria-label="Fork options"><ui-icon name="caret"></ui-icon></button></div>
<div class="grp"><button class="first"><ui-icon name="star"></ui-icon>Star <span class="n">0</span></button><button aria-label="Star lists"><ui-icon name="caret"></ui-icon></button></div></div></div>`);
define('branch-bar',`<style>
:host{display:flex;align-items:center;gap:8px}
.btn{height:32px;border:1px solid var(--line);border-radius:6px;background:var(--canvas);padding:0 12px;gap:8px;font-weight:600}
.end{padding:0 9px 0 13px}
ui-icon{color:var(--muted)}
.info{display:flex;gap:10px;margin:0 auto 0 5px;color:var(--muted);font-weight:500}
.info a{display:flex;align-items:center;gap:4px}.info b{color:#1f2328;font-weight:600}
.find{display:flex;align-items:center;gap:8px;width:227px;height:32px;border:1px solid var(--line);border-radius:6px;padding:0 6px 0 12px}
.find input{flex:1;min-width:0;border:0;outline:0;padding:0;background:none}.find input::placeholder{color:var(--muted);opacity:1}
.find kbd{font:10px/18px "DejaVu Sans Mono",monospace;border:1px solid var(--line);border-radius:5px;padding:0 4px;background:var(--canvas)}
.menu{position:relative}
.go{background:#1c7c37;border-color:#1a6f32;color:#fff}.go ui-icon{color:#fff}
clone-menu{position:absolute;top:36px;right:0;z-index:2}
</style>
<button class="btn"><ui-icon name="branch"></ui-icon>main<ui-icon name="caret"></ui-icon></button>
<div class="info"><a href="#"><ui-icon name="branch"></ui-icon><span><b>1</b> Branch</span></a><a href="#"><ui-icon name="tag"></ui-icon><span><b>0</b> Tags</span></a></div>
<label class="find"><ui-icon name="search"></ui-icon><input placeholder="Go to file" aria-label="Go to file"><kbd>t</kbd></label>
<button class="btn end">Add file<ui-icon name="caret"></ui-icon></button>
<div class="menu"><button class="btn end go"><ui-icon name="code"></ui-icon>Code<ui-icon name="caret"></ui-icon></button><clone-menu></clone-menu></div>`);
define('clone-menu',`<style>
:host{width:400px;background:#fff;border-radius:12px;box-shadow:0 0 0 1px #d0d7de80,0 8px 24px #424a5333;font-size:13px}
.tabs{display:flex;height:40px}
.tabs button{flex:1 1 50%;font-weight:500;color:var(--muted)}
.tabs button+button{border-left:1px solid var(--line);border-bottom:1px solid var(--line)}
.body{padding:16px}
.head{display:flex;align-items:center;gap:8px;height:22px;font-weight:600}
.head button{margin-left:auto;padding:0 4px;color:var(--muted)}
.proto{display:flex;gap:8px;margin-top:8px;height:47px;border-bottom:1px solid var(--line-soft)}
.proto button{height:47px;padding:0 8px;font-weight:600;border-bottom:2px solid transparent}
.proto .on{border-bottom-color:var(--accent)}
.url{display:flex;align-items:center;gap:4px;margin-top:8px}
.url input{flex:1;min-width:0;height:32px;border:1px solid var(--line);border-radius:6px;background:var(--canvas);padding:0 12px;font:11px "Liberation Mono",monospace}
.url button{width:32px;height:32px;color:var(--muted)}
.hint{margin-top:9px;color:var(--muted)}
.item{display:flex;align-items:center;gap:8px;height:53px;padding:0 16px;border-top:1px solid var(--line-soft)}.item ui-icon{color:var(--muted)}
</style>
<div class="tabs"><button>Local</button><button>Codespaces</button></div>
<div class="body"><div class="head"><ui-icon name="terminal"></ui-icon>Clone<button aria-label="Which remote URL should I use?"><ui-icon name="question"></ui-icon></button></div>
<div class="proto"><button class="on">HTTPS</button><button>SSH</button><button>GitHub CLI</button></div>
<div class="url"><input readonly aria-label="Clone URL" value="https://github.com/daniel-odc/td_ensae_2024.git"><button aria-label="Copy URL"><ui-icon name="copy"></ui-icon></button></div>
<p class="hint">Clone using the web URL.</p></div>
<a class="item" href="#"><ui-icon name="desktop"></ui-icon>Open with GitHub Desktop</a><a class="item" href="#"><ui-icon name="zip"></ui-icon>Download ZIP</a>`);
define('file-list',`<style>
:host{border:1px solid var(--line);border-radius:6px;overflow:hidden}
table{width:100%;border-collapse:collapse;table-layout:fixed}
th{height:53px;padding:0 12px;background:var(--canvas);text-align:left;font-weight:400}
th div,td div{display:flex;align-items:center;gap:10px}
th div{gap:8px}
td{height:41px;padding:0 16px;border-top:1px solid var(--line)}
.c,ui-icon{color:var(--muted)}b{font-weight:600}
</style>
<table><colgroup><col style="width:40%"><col></colgroup>
<thead><tr><th colspan="2"><div><ui-icon name="pin" size="22"></ui-icon><b>daniel-odc</b><a class="c" href="#">Initial commit</a></div></th></tr></thead>
<tbody><tr><td><div><ui-icon name="file"></ui-icon><a href="#">.gitignore</a></div></td><td class="c"><a href="#">Initial commit</a></td></tr>
<tr><td><div><ui-icon name="file"></ui-icon><a href="#">README.md</a></div></td><td class="c"><a href="#">Initial commit</a></td></tr></tbody></table>`);
define('readme-box',`<style>
:host{border:1px solid var(--line);border-radius:6px}
.tabs{display:flex;padding:0 8px;height:49px;border-bottom:2px solid var(--line)}
.tabs a{display:flex;align-items:center;gap:8px;height:48px;padding:0 8px;font-weight:600;border-bottom:2px solid var(--accent)}
ui-icon{color:var(--muted)}
article{padding:32px}
h1{font-size:30px;line-height:40px;font-weight:600;padding-bottom:10px;border-bottom:1px solid var(--line-soft)}
p{font-size:15px;line-height:24px;margin-top:16px}
</style>
<div class="tabs"><a href="#"><ui-icon name="book"></ui-icon>README</a></div>
<article><h1>td_ensae_2024</h1><p>Code and descriptions for the Python pour la data science lecture at ENSAE year 2024 - 2025</p></article>`);
define('about-panel',`<style>
:host{padding-top:4px}
h2{font-size:15px;line-height:24px;font-weight:600}
.head{display:flex;justify-content:space-between;align-items:center;color:var(--muted)}.head h2{color:#1f2328}
.desc{font-size:15px;line-height:24px;margin-top:16px;padding-right:8px}
ul{display:flex;flex-direction:column;gap:8px;margin-top:16px;color:var(--muted)}
li a{display:flex;align-items:center;gap:12px;line-height:21px}b{font-weight:600}
section{border-top:1px solid var(--line-soft);margin-top:16px;padding-top:16px}
section p{font-size:11px;line-height:18px;color:var(--muted)}h2+p{margin-top:16px}
section a{color:#0969da;text-decoration:underline;text-underline-offset:3px;text-decoration-skip-ink:none}
</style>
<div class="head"><h2>About</h2><button aria-label="Edit details"><ui-icon name="gear"></ui-icon></button></div>
<p class="desc">Code and descriptions for the Python pour la data science lecture at ENSAE year 2024 - 2025</p>
<ul><li><a href="#"><ui-icon name="book"></ui-icon>Readme</a></li><li><a href="#"><ui-icon name="pulse"></ui-icon>Activity</a></li><li><a href="#"><ui-icon name="star"></ui-icon><span><b>0</b> stars</span></a></li><li><a href="#"><ui-icon name="eye"></ui-icon><span><b>1</b> watching</span></a></li><li><a href="#"><ui-icon name="fork"></ui-icon><span><b>0</b> forks</span></a></li></ul>
<section><h2>Releases</h2><p>No releases published</p><p><a href="#">Create a new release</a></p></section>
<section><h2>Packages</h2><p>No packages published</p><p><a href="#">Publish your first package</a></p></section>`);
define('site-footer',`<style>
:host{display:flex;justify-content:center;align-items:center;gap:18px;padding:64px 7px 40px 0;font-size:11px;color:var(--muted)}
.brand{display:flex;align-items:center;gap:8px}.pair{display:flex;gap:8px}
</style>
<span class="brand"><ui-icon name="mark" size="24"></ui-icon>© 2024 GitHub, Inc.</span><a href="#">Terms</a><a href="#">Privacy</a><a href="#">Security</a><a href="#">Status</a><a href="#">Docs</a><span class="pair"><a href="#">Contact</a><a href="#">Manage cookies</a></span><a href="#">Do not share my personal information</a>`);
</script>
</body>
</html>
